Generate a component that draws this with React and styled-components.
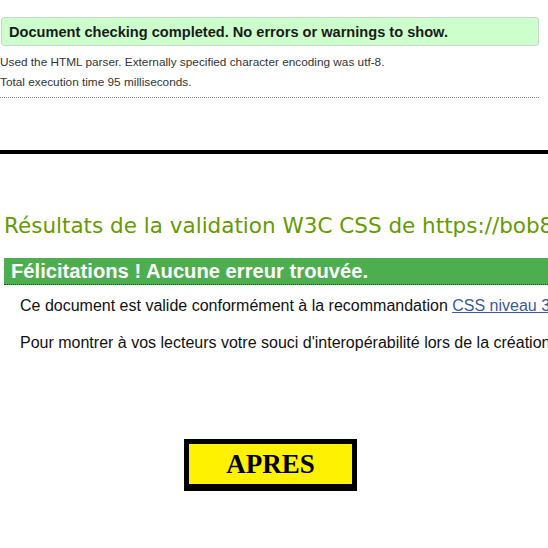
import React from 'react';
import styled, { createGlobalStyle } from 'styled-components';

const GlobalStyle = createGlobalStyle`
	html, body {
		margin: 0;
		padding: 0;
		background: #ffffff;
		overflow: hidden;
	}
	body {
		width: 548px;
		height: 548px;
		font-family: 'Liberation Sans', Arial, sans-serif;
	}
`;

const Page = styled.div`
	display: flex;
	flex-direction: column;
	width: 548px;
	padding-top: 17px;
`;

const CheckerSection = styled.section`
	display: flex;
	flex-direction: column;
	width: 538px;
	padding-left: 1px;
`;

const SuccessBox = styled.div`
	height: 27px;
	display: flex;
	align-items: center;
	padding-left: 7px;
	background: #ccffcc;
	border: 1px solid #c8d8c8;
	border-radius: 3px;
	font-size: 14.6px;
	font-weight: bold;
	color: #1a1a1a;
	white-space: nowrap;
`;

const InfoLine = styled.p`
	margin: 0;
	margin-left: -1px;
	height: 20px;
	line-height: 20px;
	font-size: 11.8px;
	color: #333333;
	&:first-of-type {
		margin-top: 6px;
	}
`;

const DottedRule = styled.hr`
	margin: 5px 0 0 -1px;
	border: none;
	border-top: 1px dotted #888888;
	height: 0;
`;

const ThickRule = styled.div`
	margin-top: 52px;
	height: 4px;
	background: #000000;
	width: 548px;
`;

const CssSection = styled.section`
	display: flex;
	flex-direction: column;
	padding-left: 4px;
	white-space: nowrap;
	overflow: hidden;
`;

const ResultTitle = styled.h2`
	margin: 59px 0 0 0;
	font-family: 'DejaVu Sans', Verdana, sans-serif;
	font-weight: normal;
	font-size: 21.5px;
	line-height: 26px;
	color: #669a00;
`;

const CongratsBar = styled.div`
	margin-top: 19px;
	height: 26px;
	display: flex;
	align-items: center;
	padding-left: 7px;
	background: #4cae4f;
	border-bottom: 1px dotted #224422;
	color: #ffffff;
	font-size: 20.2px;
	font-weight: bold;
`;

const Paragraph = styled.p`
	margin: ${(p) => p.$top}px 0 0 16px;
	font-size: 16px;
	line-height: 18px;
	color: #111111;
`;

const Link = styled.a`
	color: #3a5a99;
	text-decoration: underline;
`;

const BadgeRow = styled.div`
	display: flex;
	padding-left: 184px;
	margin-top: 87px;
`;

const Badge = styled.div`
	width: 163px;
	height: 40px;
	display: flex;
	align-items: center;
	justify-content: center;
	background: #fff200;
	border: 5px solid #000000;
	border-bottom-width: 7px;
	font-family: 'Liberation Serif', 'Times New Roman', serif;
	font-weight: bold;
	font-size: 27px;
	color: #000000;
`;

export default function App() {
	return (
		<>
			<GlobalStyle />
			<Page>
				<CheckerSection>
					<SuccessBox>Document checking completed. No errors or warnings to show.</SuccessBox>
					<InfoLine>Used the HTML parser. Externally specified character encoding was utf-8.</InfoLine>
					<InfoLine>Total execution time 95 milliseconds.</InfoLine>
					<DottedRule />
				</CheckerSection>
				<ThickRule />
				<CssSection>
					<ResultTitle>Résultats de la validation W3C CSS de https://bob86.fr</ResultTitle>
					<CongratsBar>Félicitations ! Aucune erreur trouvée.</CongratsBar>
					<Paragraph $top={12}>
						Ce document est valide conformément à la recommandation <Link href="#">CSS niveau 3 + SVG</Link> !
					</Paragraph>
					<Paragraph $top={19}>
						Pour montrer à vos lecteurs votre souci d'interopérabilité lors de la création de cette page web
					</Paragraph>
				</CssSection>
				<BadgeRow>
					<Badge>APRES</Badge>
				</BadgeRow>
			</Page>
		</>
	);
}
